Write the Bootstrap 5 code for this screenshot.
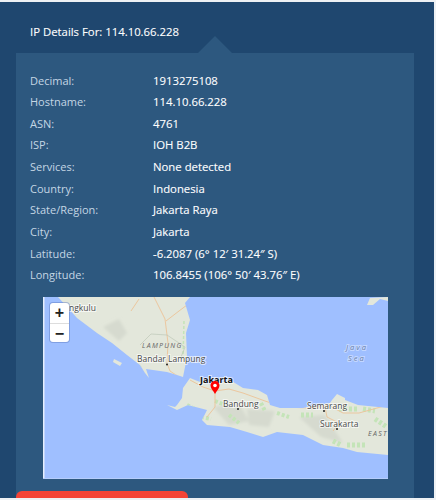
<!DOCTYPE html>
<html lang="en">
<head>
    <meta charset="UTF-8">
    <meta name="viewport" content="width=device-width, initial-scale=1.0">
    <title>IP Details</title>
    <link href="https://cdn.jsdelivr.net/npm/bootstrap@5.3.0/dist/css/bootstrap.min.css" rel="stylesheet">
    <style>
        html, body { height: 500px; overflow: hidden; }
        body {
            background-color: #eef1f4;
            font-family: "Open Sans", sans-serif;
            font-size: 11.35px;
            color: #fff;
        }
        .ip-outer {
            background-color: #1f476f;
            width: 434px;
            height: 496px;
            margin-top: 2px;
            padding: 0 20px 0 16px;
        }
        .ip-title {
            height: 51px;
            padding: 21px 0 0 14px;
            line-height: 17px;
            -webkit-text-stroke: .1px #fff;
        }
        .ip-panel {
            background-color: #2d587f;
            position: relative;
            height: 445px;
            padding: 16.5px 26px 0 14px;
        }
        .ip-panel::before {
            content: "";
            position: absolute;
            top: -17px;
            left: 182px;
            border-left: 17px solid transparent;
            border-right: 17px solid transparent;
            border-bottom: 17px solid #2d587f;
        }
        .ip-row { height: 21.67px; line-height: 21.67px; -webkit-text-stroke: .1px #fff; }
        .ip-label { width: 123px; color: #c4d6e4; font-size: 11px; -webkit-text-stroke: 0; }
        .ip-map {
            display: block;
            width: 345px;
            height: 182px;
            margin: 10.5px 0 0 13px;
            background-color: #9fbfff;
        }
        .map-label {
            font-size: 8.5px;
            fill: #4a4a4a;
            stroke: #fff;
            stroke-width: 2px;
            stroke-opacity: .65;
            paint-order: stroke;
        }
        .map-region {
            font-size: 7px;
            font-style: italic;
            letter-spacing: 1.3px;
            fill: #666;
        }
        .map-sea { fill: #6a80ab; font-size: 7.5px; letter-spacing: 2px; stroke-opacity: .4; font-style: italic; }
        .map-city { font-weight: 700; font-size: 9px; fill: #111; }
        .zoom-box {
            position: absolute;
            left: 34px;
            top: 250px;
            width: 19px;
            height: 39px;
            border-radius: 3px;
            background: #fff;
            box-shadow: 0 0 0 1px rgba(90, 120, 190, .45);
            color: #222;
            font: bold 16px/19px "Liberation Sans", sans-serif;
            text-align: center;
        }
        .zoom-box div { height: 19.5px; }
        .zoom-box div + div { border-top: 1px solid #ddd; }
        .ip-red {
            position: absolute;
            left: 0;
            top: 438px;
            width: 172px;
            height: 7px;
            background-color: #f44336;
            border-radius: 6px 6px 0 0;
        }
    </style>
</head>
<body>
    <div class="ip-outer">
        <div class="ip-title">IP Details For: 114.10.66.228</div>
        <div class="ip-panel">
            <div class="d-flex ip-row"><div class="ip-label">Decimal:</div><div>1913275108</div></div>
            <div class="d-flex ip-row"><div class="ip-label">Hostname:</div><div>114.10.66.228</div></div>
            <div class="d-flex ip-row"><div class="ip-label">ASN:</div><div>4761</div></div>
            <div class="d-flex ip-row"><div class="ip-label">ISP:</div><div>IOH B2B</div></div>
            <div class="d-flex ip-row"><div class="ip-label">Services:</div><div>None detected</div></div>
            <div class="d-flex ip-row"><div class="ip-label">Country:</div><div>Indonesia</div></div>
            <div class="d-flex ip-row"><div class="ip-label">State/Region:</div><div>Jakarta Raya</div></div>
            <div class="d-flex ip-row"><div class="ip-label">City:</div><div>Jakarta</div></div>
            <div class="d-flex ip-row"><div class="ip-label">Latitude:</div><div>-6.2087 (6° 12′ 31.24″ S)</div></div>
            <div class="d-flex ip-row"><div class="ip-label">Longitude:</div><div>106.8455 (106° 50′ 43.76″ E)</div></div>

            <!-- map, viewBox coordinates are page px minus (43,297) -->
            <svg class="ip-map" viewBox="0 0 345 182" font-family="'Open Sans', sans-serif">
                <defs>
                    <filter id="soft" x="-20%" y="-20%" width="140%" height="140%"><feGaussianBlur stdDeviation="1.5"/></filter>
                    <filter id="speck" x="-5%" y="-5%" width="110%" height="110%"><feGaussianBlur stdDeviation=".5"/></filter>
                    <clipPath id="land">
                        <path d="M15 0 L34 21 L54 36 L69 46 L84 58 L97 68 L102 76 L106 81 L103 72 L110 73 L124 75 L134 78 L140 80 L144 60 L143 36 L147 23 L142 6 L147 0 Z M124 108 L132 110 L134 108 L139 101 L140 91 L147 81 L157 85 L170 88 L187 83 L200 91 L215 93 L224 98 L227 108 L237 111 L260 111 L287 106 L289 103 L294 97 L302 101 L302 103 L315 108 L345 111 L345 158 L314 155 L300 151 L280 148 L260 138 L234 135 L220 140 L204 135 L187 130 L164 128 L159 123 L164 113 L145 108 L134 113 Z M324 8 L327 1 L345 0 L345 4 L337 2 L330 8 Z"/>
                    </clipPath>
                </defs>
                <path d="M15 0 L34 21 L54 36 L69 46 L84 58 L97 68 L102 76 L106 81 L103 72 L110 73 L124 75 L134 78 L140 80 L144 60 L143 36 L147 23 L142 6 L147 0 Z M124 108 L132 110 L134 108 L139 101 L140 91 L147 81 L157 85 L170 88 L187 83 L200 91 L215 93 L224 98 L227 108 L237 111 L260 111 L287 106 L289 103 L294 97 L302 101 L302 103 L315 108 L345 111 L345 158 L314 155 L300 151 L280 148 L260 138 L234 135 L220 140 L204 135 L187 130 L164 128 L159 123 L164 113 L145 108 L134 113 Z M324 8 L327 1 L345 0 L345 4 L337 2 L330 8 Z" fill="#e3e7db"/>
                <rect x="0" y="0" width="1.5" height="182" fill="#e6eefc"/>
                <path d="M71 62 L79 66 L77 69 L70 65 Z" fill="#e3e7db"/>

                <g clip-path="url(#land)">
                    <!-- hill shading -->
                    <g fill="#d6dacf" filter="url(#soft)">
                        <path d="M60 30 L76 22 L84 36 L76 44 Z"/>
                        <path d="M170 110 L196 106 L206 124 L186 128 Z"/>
                        <path d="M256 120 L282 118 L300 146 L278 140 Z"/>
                        <path d="M204 112 L232 114 L226 130 L206 128 Z"/>
                    </g>
                    <!-- forest -->
                    <g fill="none" stroke="#c4e4b8" filter="url(#speck)" stroke-dasharray="3 2">
                        <path d="M36 26 L58 40 L84 60 L98 70" stroke-width="2"/>
                        <path d="M141 24 L140 62" stroke-width="1.5"/>
                        <path d="M144 108 L152 112 M172 104 L182 108 M158 120 L168 122" stroke-width="4"/>
                        <path d="M186 118 L196 126 M218 106 L222 114 M234 116 L246 120" stroke-width="4"/>
                        <path d="M258 118 L270 118 M296 112 L316 112 M320 112 L332 114" stroke-width="5"/>
                        <path d="M332 122 L344 130 M304 148 L322 148 M290 144 L298 148" stroke-width="5"/>
                    </g>
                    <!-- roads -->
                    <g fill="none" stroke="#ecc397" stroke-width=".9">
                        <path d="M111 0 L122 22 L125 46 L124 66 L127 74 L136 80"/>
                        <path d="M123 24 L136 14 L144 8"/>
                        <path d="M88 14 L96 2"/>
                        <path d="M147 83 L160 90 L172 94 L186 92 L200 96 L222 104 L240 110 L268 111 L285 108 L300 116 L316 116 L345 108"/>
                        <path d="M172 94 L172 110 L164 120"/>
                        <path d="M282 110 L284 120 L296 126 L290 134"/>
                    </g>
                    <path d="M97 48 L108 37 L124 38 L142 50 L138 60" fill="none" stroke="#b7c2b2" stroke-width=".6"/>
                </g>
                <rect x="0" y="181" width="345" height="1" fill="#b5cdfb"/>

                <text class="map-label" x="26" y="14">ngkulu</text>
                <text class="map-region" x="99" y="51">LAMPUNG</text>
                <text class="map-label" x="94" y="65">Bandar Lampung</text>
                <text class="map-label" x="180" y="110">Bandung</text>
                <text class="map-label" x="264" y="112">Semarang</text>
                <text class="map-label" x="277" y="130">Surakarta</text>
                <text class="map-region" x="325" y="139">EAST</text>
                <text class="map-label map-sea" x="303" y="53">Java</text>
                <text class="map-label map-sea" x="305" y="64">Sea</text>
                <text class="map-label map-city" x="157" y="86">Jakarta</text>

                <g fill="#222">
                    <circle cx="124" cy="67.5" r="1"/>
                    <circle cx="195" cy="112" r="1"/>
                    <circle cx="281" cy="114" r="1"/>
                    <circle cx="294" cy="132" r="1"/>
                </g>
                <!-- pin -->
                <path d="M172 97 C170 93.5 167.5 91.5 167.5 88.5 A4.5 4.5 0 0 1 176.5 88.5 C176.5 91.5 174 93.5 172 97 Z" fill="#f00"/>
                <circle cx="172" cy="88.5" r="1.8" fill="#fff"/>
            </svg>
            <div class="zoom-box"><div>+</div><div>−</div></div>
            <div class="ip-red"></div>
        </div>
    </div>
    <script src="https://cdn.jsdelivr.net/npm/bootstrap@5.3.0/dist/js/bootstrap.bundle.min.js"></script>
</body>
</html>
